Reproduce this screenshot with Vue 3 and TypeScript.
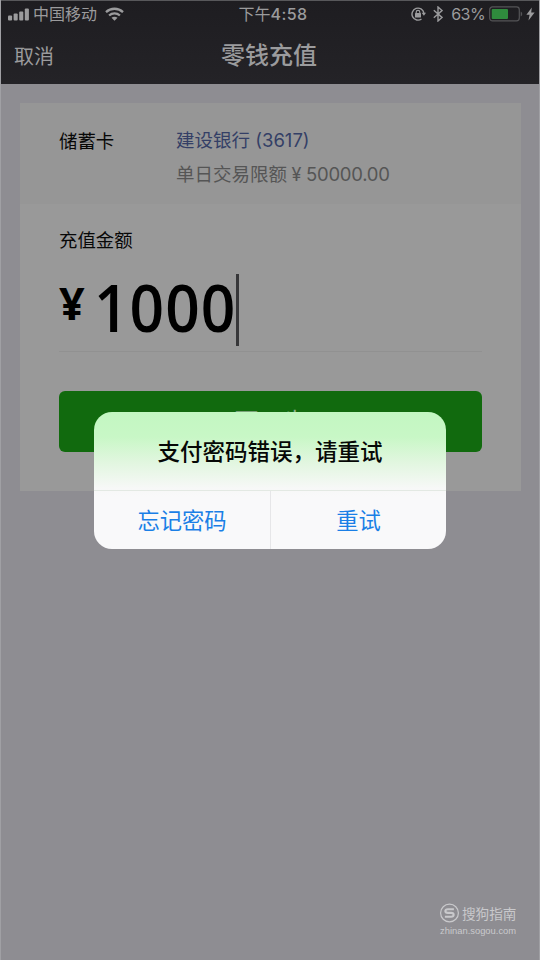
<script setup lang="ts">
import { ref } from 'vue'

const carrier = ref('中国移动')
const battery = ref(63)
const amount = ref('1000')
const bars = [5, 7, 9, 12].map((h, i) => ({ x: i * 5.6, y: 12.5 - h, h }))
</script>

<template>
  <div class="screen">
    <header class="top">
      <div class="status">
        <div class="side">
          <svg class="signal" width="22" height="13" viewBox="0 0 22 13">
            <rect v-for="b in bars" :key="b.x" :x="b.x" :y="b.y" width="4.1" :height="b.h" rx="1" fill="currentColor" />
          </svg>
          <span class="carrier">{{ carrier }}</span>
          <svg class="wifi" width="19" height="14" viewBox="0 0 19 14">
            <g fill="none" stroke="currentColor" stroke-width="2.3">
              <path d="M1 5.1C5.8.6 13.2.6 18 5.1" />
              <path d="M4.1 8.5c3.1-2.9 7.7-2.9 10.8 0" />
            </g>
            <path d="M6.5 10.8c1.7-1.5 4.3-1.5 6 0L9.5 13.7z" fill="currentColor" />
          </svg>
        </div>
        <span class="time">下午<b>4:58</b></span>
        <div class="side right">
          <svg class="lock" width="16" height="14" viewBox="0 0 16 14">
            <path d="M10.5 12A6 6 0 1 1 12.9 6" fill="none" stroke="currentColor" stroke-width="1.4" />
            <path d="M10.6 5.7h4.4L12.9 8.8z" fill="currentColor" />
            <rect x="4" y="6" width="6" height="4.4" rx=".5" fill="currentColor" />
            <path d="M5.2 6.5V5.2a1.8 1.8 0 0 1 3.6 0v1.3" fill="none" stroke="currentColor" stroke-width="1.2" />
          </svg>
          <svg class="bluetooth" width="10" height="16" viewBox="0 0 10 16">
            <path d="M.8 4.2 9 11.4 5 15V1l4 3.6-8.2 7.2" fill="none" stroke="currentColor" stroke-width="1.4" />
          </svg>
          <span class="percent">{{ battery }}%</span>
          <svg class="battery" width="34" height="16" viewBox="0 0 34 16">
            <rect x=".7" y=".9" width="29.6" height="14" rx="2.8" fill="none" stroke="#545457" stroke-width="1.2" />
            <rect x="2.7" y="2.9" width="16.3" height="10" rx="1" fill="#2f8a3d" />
            <path d="M31.7 5.4c2 .8 2 4.2 0 5z" fill="#545457" />
          </svg>
          <svg class="bolt" width="9" height="14" viewBox="0 0 9 14">
            <path d="M5.8.5.4 7.8h3.2L2.5 13.5 8.6 5.5H5.2z" fill="currentColor" />
          </svg>
        </div>
      </div>
      <nav class="nav">
        <span class="cancel">取消</span>
        <h1>零钱充值</h1>
        <span></span>
      </nav>
    </header>

    <main class="card">
      <section class="bank">
        <span class="label">储蓄卡</span>
        <div>
          <div class="bank-name">建设银行 (3617)</div>
          <div class="limit">单日交易限额<i class="yen">¥</i><span>50000.00</span></div>
        </div>
      </section>
      <section class="form">
        <div class="label">充值金额</div>
        <div class="amount">
          <span class="currency">¥</span>
          <span class="number">{{ amount }}</span>
          <span class="caret"></span>
        </div>
        <button class="next">下一步</button>
      </section>
    </main>

    <div class="dialog" role="dialog">
      <p>支付密码错误，请重试</p>
      <div class="actions">
        <button>忘记密码</button>
        <button>重试</button>
      </div>
    </div>

    <footer class="mark">
      <div class="brand">
        <svg width="20" height="20" viewBox="0 0 20 20" fill="none" stroke="currentColor">
          <circle cx="9.5" cy="10" r="8.9" stroke-width="1.2" />
          <path d="M13.9 6.2H7.9C4.5 6.2 4.5 9.9 7.9 9.9h3.2c3.4 0 3.4 3.9 0 3.9H4.9" stroke-width="2.1" />
        </svg>
        <span>搜狗指南</span>
      </div>
      <div class="site">zhinan.sogou.com</div>
    </footer>
  </div>
</template>

<style>
body {
  margin: 0;
}
</style>

<style scoped>
.screen {
  position: relative;
  box-sizing: border-box;
  width: 540px;
  height: 960px;
  overflow: hidden;
  background: #8e8d92;
  box-shadow: inset 1px 0 #a0a0a4, inset -1px 0 #a0a0a4;
  font-family: Inter, "Noto Sans CJK SC", sans-serif;
}
.top {
  box-sizing: border-box;
  height: 84px;
  margin: 0 1px;
  border-top: 1px solid #58585b;
  background: linear-gradient(#1e1d21, #242327);
  color: #9b9b9d;
}
.status {
  display: grid;
  grid-template-columns: 1fr auto 1fr;
  align-items: center;
  height: 26px;
  font-size: 16px;
  line-height: 26px;
}
.side {
  display: flex;
  align-items: center;
  padding-left: 7px;
}
.side.right {
  justify-content: flex-end;
  padding: 0 4px 0 0;
}
.carrier {
  margin: 0 8px 0 3px;
}
.time {
  padding-left: 6px;
}
.time b {
  font-weight: 500;
  letter-spacing: 0.4px;
}
.bluetooth {
  margin: 0 8px 0 6px;
}
.percent {
  margin-right: 4px;
  font-size: 16px;
  letter-spacing: -0.6px;
}
.bolt {
  margin-left: 3px;
}
.nav {
  display: grid;
  grid-template-columns: 1fr auto 1fr;
  align-items: center;
  height: 56px;
}
.cancel {
  padding-left: 13px;
  font-size: 20px;
}
h1 {
  margin: 0;
  padding: 1px 2px 0 0;
  font-size: 24px;
  font-weight: 500;
  line-height: 50px;
}
.card {
  box-sizing: border-box;
  width: 501px;
  height: 388px;
  margin: 19px 0 0 20px;
  background: #999;
}
.bank {
  box-sizing: border-box;
  display: grid;
  grid-template-columns: 117px 1fr;
  height: 101px;
  padding: 20px 0 0 39px;
  background: #969696;
  line-height: 34px;
  font-size: 18.5px;
}
.label {
  color: #080808;
  font-size: 18.4px;
}
.bank .label {
  padding-top: 1px;
}
.bank-name {
  color: #343f66;
}
.limit {
  color: #555;
}
.limit span {
  letter-spacing: -0.25px;
}
.yen {
  display: inline-block;
  width: 19px;
  text-align: center;
  font-style: normal;
  font-size: 18px;
}
.form {
  padding: 19px 39px 0;
}
.form .label {
  line-height: 34px;
}
.amount {
  display: flex;
  height: 94px;
  border-bottom: 1px solid #919191;
  color: #000;
  font-family: "Open Sans", sans-serif;
  font-weight: 600;
}
.currency {
  width: 35px;
  font-size: 45px;
  font-weight: 700;
  line-height: 92px;
}
.number {
  width: 155px;
  font-size: 65px;
  line-height: 101px;
  letter-spacing: 1.1px;
  transform: scaleX(0.93);
  transform-origin: left;
}
.caret {
  width: 3px;
  height: 72px;
  margin: 17px 0 0 -13px;
  background: #373739;
}
button {
  padding: 0;
  border: 0;
  font-family: inherit;
}
.next {
  display: block;
  width: 100%;
  height: 61px;
  margin-top: 39px;
  padding-bottom: 5px;
  border-radius: 6px;
  background: #116a0e;
  color: #8fae8e;
  font-size: 24px;
}
.dialog {
  position: absolute;
  left: 94px;
  top: 412px;
  width: 352px;
  height: 137px;
  overflow: hidden;
  border-radius: 18px;
  background: linear-gradient(#c3f7c2 0, #c8f7c6 25px, #e1f6df 50px, #f7f8f7 76px, #f9f9fa 85px);
}
.dialog p {
  box-sizing: border-box;
  height: 79px;
  margin: 0;
  border-bottom: 1px solid #e3e9e3;
  color: #060806;
  font-size: 22.5px;
  font-weight: 500;
  line-height: 79px;
  text-align: center;
}
.actions {
  display: grid;
  grid-template-columns: 1fr 1fr;
  height: 58px;
}
.actions button {
  padding-bottom: 2px;
  background: none;
  color: #1a7fe6;
  font-size: 22.3px;
}
.actions button + button {
  border-left: 1px solid #e6e6e8;
}
.mark {
  position: absolute;
  left: 440px;
  top: 903px;
  color: #c9c9cc;
}
.brand {
  display: flex;
  align-items: center;
  gap: 2px;
  height: 20px;
  font-size: 13.6px;
}
.site {
  font: 9.4px/15px "Liberation Sans", sans-serif;
}
</style>
